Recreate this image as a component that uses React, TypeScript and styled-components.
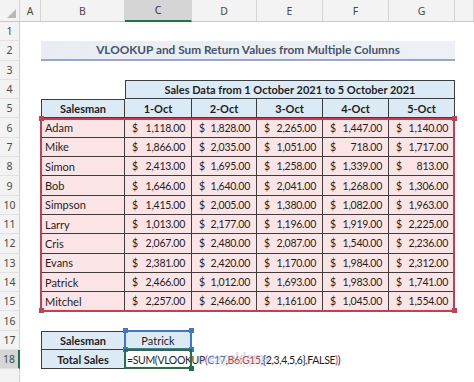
import { FC } from "react";
import { createGlobalStyle, styled } from "styled-components";

const COLS = [20, 21, 84, 67, 65, 66, 66, 66, 19];
const colTemplate = COLS.map((c) => `${c}px`).join(" ");
const HEADER_H = 22;
const ROW_H = 19.3;
const colLeft = (i: number) => COLS.slice(0, i).reduce((a, b) => a + b, 0);
const rowTop = (r: number) => HEADER_H + (r - 1) * ROW_H;

const LETTERS = ["A", "B", "C", "D", "E", "F", "G", ""];
const DAYS = ["1-Oct", "2-Oct", "3-Oct", "4-Oct", "5-Oct"];

const sales: [string, number[]][] = [
  ["Adam", [1118, 1828, 2265, 1447, 1140]],
  ["Mike", [1866, 2035, 1051, 718, 1717]],
  ["Simon", [2413, 1695, 1258, 1339, 813]],
  ["Bob", [1646, 1640, 2041, 1268, 1306]],
  ["Simpson", [1415, 2005, 1380, 1082, 1963]],
  ["Larry", [1013, 2177, 1196, 1919, 2225]],
  ["Cris", [2067, 2480, 2087, 1540, 2236]],
  ["Evans", [2381, 2420, 1170, 1984, 2312]],
  ["Patrick", [2466, 1012, 1693, 1983, 1741]],
  ["Mitchel", [2257, 2466, 1161, 1045, 1554]],
];

const money = (n: number) =>
  n.toLocaleString("en-US", { minimumFractionDigits: 2, maximumFractionDigits: 2 });

const GlobalStyle = createGlobalStyle`
  html, body { margin: 0; padding: 0; background: #fff; }
  body { font-family: "Lato", "Liberation Sans", sans-serif; }
`;

const Sheet = styled.div`
  position: relative;
  width: 474px;
  height: 382px;
  overflow: hidden;
  display: flex;
  flex-direction: column;
  background: #fff;
  color: #1e1e1e;
  font-size: 11px;
`;

const HeaderRow = styled.div`
  display: grid;
  grid-template-columns: ${colTemplate};
  height: ${HEADER_H}px;
  flex-shrink: 0;
  background: #f3f3f3;
  box-sizing: border-box;
  border-bottom: 1px solid #c9c9c9;
`;

const Corner = styled.div`
  display: flex;
  align-items: flex-end;
  justify-content: flex-end;
  padding: 0 3px 3px 0;
  border-right: 1px solid #d4d4d4;
  &::after {
    content: "";
    width: 0;
    height: 0;
    border-left: 9px solid transparent;
    border-bottom: 9px solid #b9b9b9;
  }
`;

const ColLetter = styled.div<{ $active?: boolean }>`
  display: flex;
  align-items: center;
  justify-content: center;
  box-sizing: border-box;
  font-family: "Noto Sans", sans-serif;
  font-size: 10.5px;
  color: ${({ $active }) => ($active ? "#333" : "#4a4a4a")};
  border-right: 1px solid #d4d4d4;
  background: ${({ $active }) => ($active ? "#d5d5d5" : "transparent")};
  ${({ $active }) => $active && "border-bottom: 2px solid #217346; margin-bottom: -1px;"}
`;

const Row = styled.div`
  display: grid;
  grid-template-columns: ${colTemplate};
  height: ${ROW_H}px;
  flex-shrink: 0;
`;

const RowNum = styled.div<{ $active?: boolean }>`
  display: flex;
  align-items: center;
  justify-content: center;
  box-sizing: border-box;
  font-family: "Noto Sans", sans-serif;
  font-size: 10.5px;
  color: #4a4a4a;
  background: ${({ $active }) => ($active ? "#d5d5d5" : "#f3f3f3")};
  border-right: ${({ $active }) => ($active ? "2px solid #217346" : "1px solid #cfcfcf")};
  border-bottom: 1px solid #e2e2e2;
`;

const Blank = styled.div``;

const TitleCell = styled.div`
  grid-column: span 6;
  display: flex;
  align-items: center;
  justify-content: center;
  box-sizing: border-box;
  background: linear-gradient(90deg, #e9ecf2, #eef0f5);
  border-bottom: 2px solid #95a6d6;
  font-size: 11.8px;
  font-weight: 700;
  color: #44546a;
`;

const Cell = styled.div<{
  $span?: number;
  $bg?: string;
  $top?: boolean;
  $left?: boolean;
  $bold?: boolean;
  $align?: "left" | "center";
}>`
  grid-column: span ${({ $span }) => $span ?? 1};
  display: flex;
  align-items: center;
  justify-content: ${({ $align }) => ($align === "left" ? "flex-start" : "center")};
  box-sizing: border-box;
  padding: 0 3px;
  background: ${({ $bg }) => $bg ?? "transparent"};
  border-right: 1px solid #3d3d3d;
  border-bottom: 1px solid #3d3d3d;
  ${({ $top }) => $top && "border-top: 1px solid #3d3d3d;"}
  ${({ $left }) => $left && "border-left: 1px solid #3d3d3d;"}
  font-weight: ${({ $bold }) => ($bold ? 700 : 400)};
  white-space: nowrap;
`;

const MoneyCell = styled(Cell)`
  justify-content: space-between;
  padding: 0 6px 0 7px;
  font-size: 10.5px;
  letter-spacing: -0.25px;
`;

const FormulaCell = styled.div`
  display: flex;
  align-items: center;
  padding-left: 2px;
  white-space: nowrap;
  overflow: visible;
  position: relative;
  z-index: 1;
  font-size: 10.5px;
  letter-spacing: -0.35px;
`;

const Ref = styled.span<{ $color: string }>`
  color: ${({ $color }) => $color};
`;

const Outline = styled.div<{ $color: string }>`
  position: absolute;
  box-sizing: border-box;
  border: 2px solid ${({ $color }) => $color};
  pointer-events: none;
  z-index: 3;
`;

const Handle = styled.span<{ $color: string; $x: "l" | "r"; $y: "t" | "b" }>`
  position: absolute;
  width: 5px;
  height: 5px;
  background: ${({ $color }) => $color};
  ${({ $x }) => ($x === "l" ? "left: -3.5px;" : "right: -3.5px;")}
  ${({ $y }) => ($y === "t" ? "top: -3.5px;" : "bottom: -3.5px;")}
`;

const Watermark = styled.div`
  position: absolute;
  left: 196px;
  top: 351px;
  display: flex;
  align-items: center;
  gap: 3px;
  opacity: 0.3;
  z-index: 4;
  pointer-events: none;
`;

const WatermarkText = styled.div`
  display: flex;
  flex-direction: column;
  line-height: 1;
  color: #6f87a8;
  font-size: 13px;
  font-weight: 700;
  span {
    font-size: 4px;
    letter-spacing: 1px;
    font-weight: 400;
    text-align: center;
  }
`;

type BoxProps = { row: number; col: number; rows?: number; cols?: number; color: string };

const RefBox: FC<BoxProps> = ({ row, col, rows = 1, cols = 1, color }) => (
  <Outline
    $color={color}
    style={{
      left: colLeft(col + 1) - 1,
      top: rowTop(row) - 1,
      width: colLeft(col + 1 + cols) - colLeft(col + 1) + 1,
      height: rows * ROW_H + 1,
    }}
  >
    {(["l", "r"] as const).map((x) =>
      (["t", "b"] as const).map((y) => <Handle key={x + y} $color={color} $x={x} $y={y} />)
    )}
  </Outline>
);

const App: FC = () => {
  const lightBlue = "#dceaf6";
  const pink = "#fbe4e6";
  return (
    <>
      <GlobalStyle />
      <Sheet>
        <HeaderRow>
          <Corner />
          {LETTERS.map((l, i) => (
            <ColLetter key={i} $active={l === "C"}>
              {l}
            </ColLetter>
          ))}
        </HeaderRow>

        <Row>
          <RowNum>1</RowNum>
        </Row>
        <Row>
          <RowNum>2</RowNum>
          <Blank />
          <TitleCell>VLOOKUP and Sum Return Values from Multiple Columns</TitleCell>
        </Row>
        <Row>
          <RowNum>3</RowNum>
        </Row>
        <Row>
          <RowNum>4</RowNum>
          <Blank />
          <Blank />
          <Cell $span={5} $bg={lightBlue} $top $left $bold>
            Sales Data from 1 October 2021 to 5 October 2021
          </Cell>
        </Row>
        <Row>
          <RowNum>5</RowNum>
          <Blank />
          <Cell $bg={lightBlue} $top $left $bold>
            Salesman
          </Cell>
          {DAYS.map((d) => (
            <Cell key={d} $bg={lightBlue} $bold>
              {d}
            </Cell>
          ))}
        </Row>
        {sales.map(([name, values], i) => (
          <Row key={name}>
            <RowNum>{i + 6}</RowNum>
            <Blank />
            <Cell $bg={pink} $left $align="left">
              {name}
            </Cell>
            {values.map((v, j) => (
              <MoneyCell key={j} $bg={pink}>
                <span>$</span>
                <span>{money(v)}</span>
              </MoneyCell>
            ))}
          </Row>
        ))}
        <Row>
          <RowNum>16</RowNum>
        </Row>
        <Row>
          <RowNum>17</RowNum>
          <Blank />
          <Cell $bg={lightBlue} $top $left $bold>
            Salesman
          </Cell>
          <Cell $bg={lightBlue} $top>
            Patrick
          </Cell>
        </Row>
        <Row>
          <RowNum $active>18</RowNum>
          <Blank />
          <Cell $bg={lightBlue} $left $bold>
            Total Sales
          </Cell>
          <FormulaCell>
            =SUM(VLOOKUP<Ref $color="#b5338a">(</Ref>
            <Ref $color="#3f76c9">C17</Ref>,<Ref $color="#c0404f">B6:G15</Ref>
            ,{"{2,3,4,5,6}"},FALSE<Ref $color="#b5338a">)</Ref>)
          </FormulaCell>
        </Row>
        <Row>
          <RowNum />
        </Row>

        <RefBox row={6} col={1} rows={10} cols={6} color="#c23f55" />
        <RefBox row={17} col={2} color="#3f76c9" />
        <Outline
          $color="#217346"
          style={{ left: colLeft(3) - 1, top: rowTop(18) - 1, width: COLS[3] + 1, height: ROW_H + 1 }}
        >
          <Handle $color="#217346" $x="r" $y="b" />
        </Outline>

        <Watermark>
          <svg width="10" height="10" viewBox="0 0 10 10">
            <path d="M5 0 L10 5 L5 10 L0 5 Z" fill="#8a8fa0" />
          </svg>
          <WatermarkText>
            exceldemy
            <span>EXCEL · DATA · BI</span>
          </WatermarkText>
        </Watermark>
      </Sheet>
    </>
  );
};

export default App;
